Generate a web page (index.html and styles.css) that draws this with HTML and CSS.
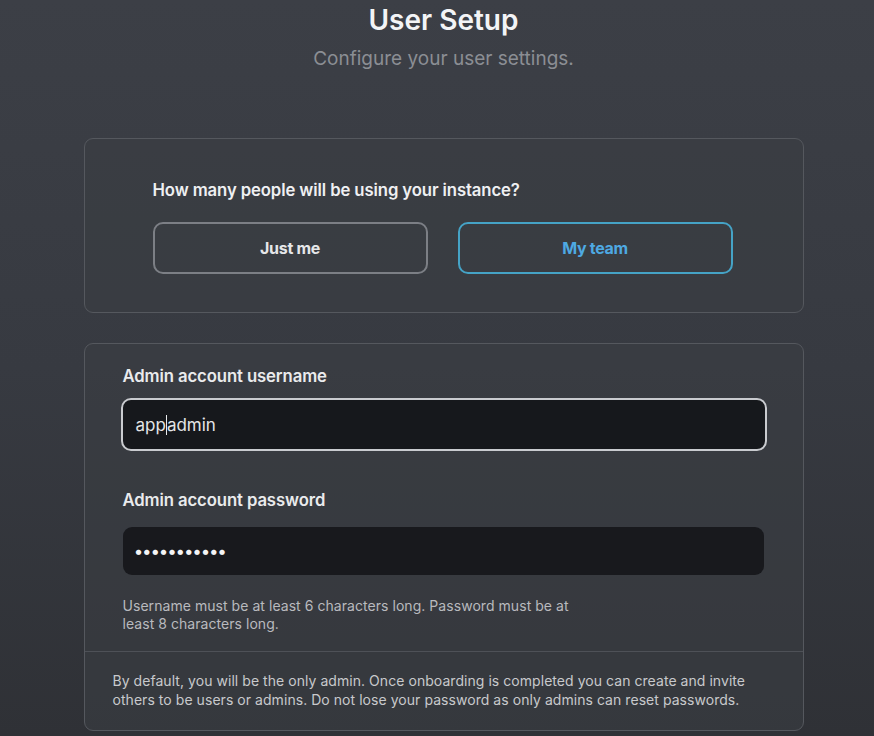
FILE: index.html
```html
<!DOCTYPE html>
<html lang="en">
<head>
<meta charset="utf-8">
<title>User Setup</title>
<link rel="stylesheet" href="styles.css">
</head>
<body>
<main class="page">
  <header class="head">
    <h1 class="title">User Setup</h1>
    <p class="subtitle">Configure your user settings.</p>
  </header>

  <section class="card card-choice">
    <p class="question">How many people will be using your instance?</p>
    <div class="choices">
      <button class="choice">Just me</button>
      <button class="choice choice-active">My team</button>
    </div>
  </section>

  <section class="card card-form">
    <div class="form-body">
      <label class="label">Admin account username</label>
      <div class="input input-focus"><span>app</span><span class="caret"></span><span>admin</span></div>
      <label class="label label-2">Admin account password</label>
      <div class="input input-plain"><span class="dots">•••••••••••</span></div>
      <p class="help">Username must be at least 6 characters long. Password must be at least 8 characters long.</p>
    </div>
    <div class="form-foot">
      <p class="note">By default, you will be the only admin. Once onboarding is completed you can create and invite others to be users or admins. Do not lose your password as only admins can reset passwords.</p>
    </div>
  </section>
</main>
</body>
</html>
```

FILE: styles.css
```css
* { box-sizing: border-box; }
html, body { margin: 0; padding: 0; }
body {
  width: 874px;
  height: 736px;
  overflow: hidden;
  background: linear-gradient(180deg, #3c3f46 0%, #373a41 50%, #2f3136 100%);
  font-family: "Inter", "Liberation Sans", sans-serif;
  color: #e9eaec;
}
.page {
  display: flex;
  flex-direction: column;
  align-items: center;
  padding-top: 3px;
  padding-left: 13px;
}
.head { text-align: center; }
.title {
  margin: 0;
  font-size: 28px;
  font-weight: 600;
  line-height: 34px;
  letter-spacing: 0;
  color: #f3f4f6;
}
.subtitle {
  margin: 10px 0 0;
  font-size: 19px;
  line-height: 24px;
  color: #8b8e94;
}
.card {
  width: 720px;
  border: 1px solid #55585e;
  border-radius: 9px;
  background: rgba(58, 61, 67, 0.6);
}
.card-choice {
  margin-top: 67px;
  height: 175px;
  padding: 39px 68px 0;
}
.question {
  margin: 0;
  font-size: 16.7px;
  font-weight: 600;
  line-height: 24px;
  letter-spacing: -0.1px;
  color: #eff0f2;
}
.choices {
  display: flex;
  gap: 30px;
  margin-top: 20px;
}
.choice {
  flex: 0 0 275px;
  height: 52px;
  border-radius: 10px;
  border: 2px solid #7c7f85;
  background: transparent;
  font-family: inherit;
  font-size: 16px;
  font-weight: 700;
  letter-spacing: -0.3px;
  color: #e6e7e9;
}
.choice-active {
  border-color: #45a3c6;
  color: #4ea9e2;
}
.card-form {
  margin-top: 30px;
  height: 388px;
  display: flex;
  flex-direction: column;
}
.form-body {
  padding: 20px 38px 0;
  height: 307px;
}
.label {
  display: block;
  font-size: 16.7px;
  font-weight: 600;
  line-height: 24px;
  letter-spacing: -0.1px;
  color: #eaebed;
}
.label-2 { margin-top: 37px; }
.input {
  display: flex;
  align-items: center;
  border-radius: 10px;
  background: #16181c;
  font-size: 17px;
  color: #e4e5e7;
}
.input-focus {
  margin-top: 10px;
  margin-left: -2px;
  width: 646px;
  height: 53px;
  border: 2px solid #c9cbcf;
  padding-left: 13px;
}
.caret {
  width: 1px;
  height: 20px;
  background: #e9eaec;
}
.input-plain {
  margin-top: 15px;
  width: 641px;
  height: 48px;
  border-radius: 9px;
  background: #18191d;
  padding-left: 12px;
}
.dots {
  font-size: 17px;
  font-weight: 700;
  letter-spacing: 0.3px;
  color: #f4f4f5;
}
.help {
  margin: 22px 0 0;
  width: 460px;
  font-size: 14px;
  line-height: 18px;
  letter-spacing: 0.05px;
  color: #b9babe;
}
.form-foot {
  border-top: 1px solid #4e5157;
  padding: 19px 28px 0;
  flex: 1;
}
.note {
  margin: 0;
  font-size: 14px;
  line-height: 19px;
  letter-spacing: 0.05px;
  color: #c8c9cc;
  width: 655px;
}
```
